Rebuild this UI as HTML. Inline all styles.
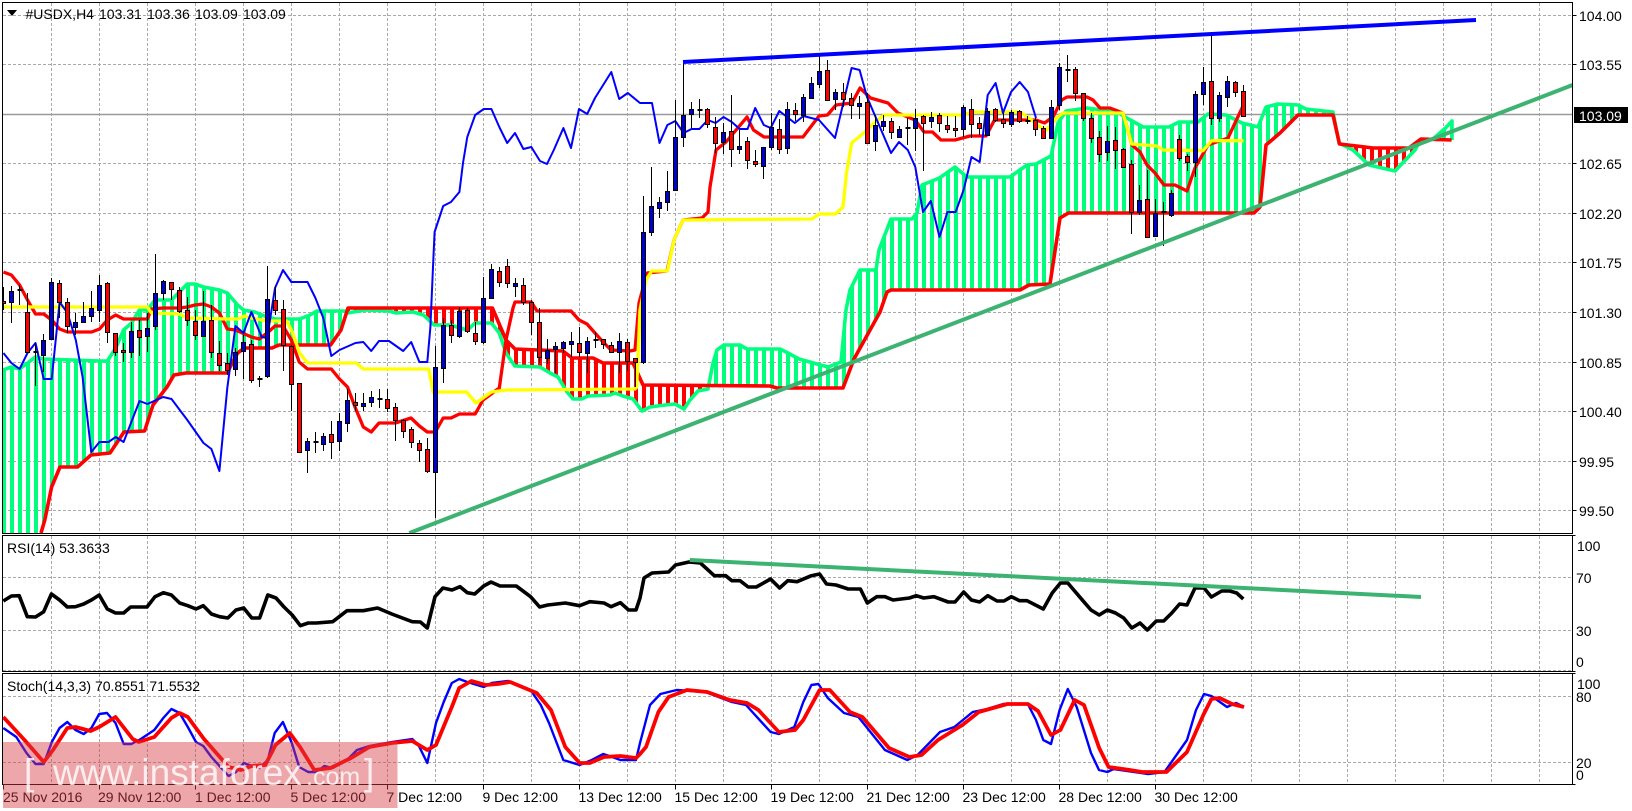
<!DOCTYPE html>
<html><head><meta charset="utf-8"><title>#USDX,H4</title>
<style>
html,body{margin:0;padding:0;background:#fff;width:1632px;height:811px;overflow:hidden}
svg{display:block}
text{font-family:"Liberation Sans",sans-serif;font-size:14px;fill:#000}
</style></head><body>
<svg width="1632" height="811" viewBox="0 0 1632 811" xmlns="http://www.w3.org/2000/svg">
<defs>
<clipPath id="pp"><rect x="3" y="3" width="1569" height="530"/></clipPath>
<clipPath id="pr"><rect x="3" y="536" width="1569" height="135"/></clipPath>
<clipPath id="ps"><rect x="3" y="674" width="1569" height="110"/></clipPath>
<pattern id="hg" patternUnits="userSpaceOnUse" x="0" y="0" width="8" height="8"><rect x="2" y="0" width="4" height="8" fill="#00ff7f"/></pattern>
<pattern id="hr" patternUnits="userSpaceOnUse" x="0" y="0" width="8" height="8"><rect x="2" y="0" width="4" height="8" fill="#ff0000"/></pattern>
</defs>
<rect width="1632" height="811" fill="#fff"/>

<!-- grid -->
<g fill="none" stroke="#a9a9a9" stroke-width="1" stroke-dasharray="3 2">
<path d="M3 15.5H1572M3 64.5H1572M3 163.5H1572M3 213.5H1572M3 262.5H1572M3 312.5H1572M3 362.5H1572M3 411.5H1572M3 461.5H1572M3 510.5H1572"/>
<path d="M3 577.5H1572M3 630.5H1572M3 670.5H1572M3 696.5H1572M3 762.5H1572"/>
<path d="M51.5 3V533M99.5 3V533M147.5 3V533M195.5 3V533M243.5 3V533M291.5 3V533M339.5 3V533M387.5 3V533M435.5 3V533M483.5 3V533M531.5 3V533M579.5 3V533M627.5 3V533M675.5 3V533M723.5 3V533M771.5 3V533M819.5 3V533M867.5 3V533M915.5 3V533M963.5 3V533M1011.5 3V533M1059.5 3V533M1107.5 3V533M1155.5 3V533M1203.5 3V533M1251.5 3V533M1299.5 3V533M1347.5 3V533M1395.5 3V533M1443.5 3V533M1491.5 3V533M1539.5 3V533"/>
<path d="M51.5 536V671M99.5 536V671M147.5 536V671M195.5 536V671M243.5 536V671M291.5 536V671M339.5 536V671M387.5 536V671M435.5 536V671M483.5 536V671M531.5 536V671M579.5 536V671M627.5 536V671M675.5 536V671M723.5 536V671M771.5 536V671M819.5 536V671M867.5 536V671M915.5 536V671M963.5 536V671M1011.5 536V671M1059.5 536V671M1107.5 536V671M1155.5 536V671M1203.5 536V671M1251.5 536V671M1299.5 536V671M1347.5 536V671M1395.5 536V671M1443.5 536V671M1491.5 536V671M1539.5 536V671"/>
<path d="M51.5 674V784M99.5 674V784M147.5 674V784M195.5 674V784M243.5 674V784M291.5 674V784M339.5 674V784M387.5 674V784M435.5 674V784M483.5 674V784M531.5 674V784M579.5 674V784M627.5 674V784M675.5 674V784M723.5 674V784M771.5 674V784M819.5 674V784M867.5 674V784M915.5 674V784M963.5 674V784M1011.5 674V784M1059.5 674V784M1107.5 674V784M1155.5 674V784M1203.5 674V784M1251.5 674V784M1299.5 674V784M1347.5 674V784M1395.5 674V784M1443.5 674V784M1491.5 674V784M1539.5 674V784"/>
</g>
<path d="M3 114.5H1572" stroke="#9a9a9a" stroke-width="1.5" fill="none"/>

<g clip-path="url(#pp)">
<!-- kumo hatch -->
<polygon fill="url(#hg)" points="3,370 11.4,367 19.6,369 27.5,363 35.5,357 43.7,359 100,361 107.4,361 115.7,348 123.6,330 131.5,323 139.5,310 147.4,310 155,300 171.5,300 179.4,292 187.3,284 195,284 203.5,287 219.4,290 227.3,293 237.6,305 243.5,310 254.8,312 267.2,317 275.5,319 299.6,319 310,315 316.8,311 345,311 341,330 330.6,345 279,345 272,348 244.5,348 237.6,353 227,373 186,373 174,375 167,387 153,405 144.6,431 124,432 110,453 91,455 77.5,467 60,467 51.6,487 44.8,520 41,533 3,533"/>
<polygon fill="url(#hr)" points="345,311 348,308 492.4,308 506,340 515,349 563,351 572,358 593,358 603,363 633,363 643,385 708,386 698,391 690,400 684,409 675,404 665,405 650,407 642,411 633,399 623,396 615,393 610,395 588,396 581.7,399 573,399 567,392 558,377 550,373 540,367 514.8,366 506,353 499.3,333 491.4,323 475.2,323 467.3,330 459.7,328 451,325 434,325 423.5,315 413,312 396,313 389,311 365,310 347.5,313"/>
<polygon fill="url(#hg)" points="708,386 713,363 717,350 724,345 740,345 747,349 780,349 788,353 799,359 828,367 841,362 846,310 850,290 860,270 876,270 879,250 884,237 891,219 912,219 917,213 922,185 939.5,178 955,167 967,177 1010,177 1027,165 1036,164 1051,156 1058,123 1066,111 1087,108 1117,112 1125,117 1143,127 1169,127 1179,122 1198,122 1208,114 1226,115 1242,123 1258,127 1266,107 1278,104 1298,105 1306,109 1333,112 1336,114 1298,115 1280,133 1266,145 1260,207 1254,213 1068.5,213 1060,218 1050,284 1029,285 1020,290 891,290 887,292 880,312 854,359 843,388 777,388 770,386"/>
<polygon fill="url(#hr)" points="1339,144 1365,147 1373,148 1409,148 1415,147 1395,171 1369,165 1353,150"/>
<polygon fill="url(#hg)" points="1415,148 1419,143 1433,139 1445.5,128 1452,121 1452,140 1421,139"/>

<g fill="none" stroke-linejoin="round" stroke-linecap="butt">
<!-- senkou A -->
<polyline stroke="#00ff7f" stroke-width="3.6" points="3,370 11.4,367 19.6,369 27.5,363 35.5,357 43.7,359 100,361 107.4,361 115.7,348 123.6,330 131.5,323 139.5,310 147.4,310 155,300 171.5,300 179.4,292 187.3,284 195,284 203.5,287 219.4,290 227.3,293 237.6,305 243.5,310 254.8,312 267.2,317 275.5,319 299.6,319 310,315 316.8,311 344.4,311 347.5,313 365,310 389,311 396,313 413,312 423.5,315 434,325 451,325 459.7,328 467.3,330 475.2,323 491.4,323 499.3,333 506,353 514.8,366 540,367 550,373 558,377 567,392 573,399 581.7,399 588,396 610,395 615,393 623,396 633,399 642,411 650,407 665,405 675,404 684,409 690,400 698,391 708,389 713,363 717,350 724,345 740,345 747,349 780,349 788,353 799,359 828,367 841,362 846,310 850,290 860,270 876,270 879,250 884,237 891,219 912,219 917,213 922,185 939.5,178 955,167 967,177 1010,177 1027,165 1036,164 1051,156 1058,123 1066,111 1087,108 1117,112 1125,117 1143,127 1169,127 1179,122 1198,122 1208,114 1226,115 1242,123 1258,127 1266,107 1278,104 1298,105 1306,109 1333,112 1339,143 1353,150 1369,165 1395,171 1415,150 1419,143 1433,139 1445.5,128 1452,121 1452,140"/>
<!-- senkou B -->
<polyline stroke="#ff0000" stroke-width="3.6" points="41,533 44.8,520 51.6,487 60,467 77.5,467 91,455 110,453 124,432 144.6,431 153,405 167,387 174,375 186,373 227,373 237.6,353 244.5,348 272,348 279,345 330.6,345 341,330 348,308 492.4,308 506,340 515,349 563,351 572,358 593,358 603,363 633,363 643,385 770,386 777,388 843,388 854,359 880,312 887,292 891,290 1020,290 1029,285 1050,284 1060,218 1068.5,213 1254,213 1260,207 1266,145 1280,133 1298,115 1333,115 1339.5,144 1365,147 1373,148 1409,148 1421,139 1451.6,140"/>
<!-- tenkan -->
<polyline stroke="#ff0000" stroke-width="3.3" points="3.4,272 11.4,275 19.6,285 27.5,300 35.5,314 43.7,314 51.7,320 59.6,329 67.5,332 91.6,332 99.5,329 107.4,320 115.7,315 123.6,319 147.4,319 151.5,309 163,308 179.4,308 187.3,307 195,305 203.5,304 211.4,307 219.4,313 227.3,329 235.5,330 251.4,337 259.3,339 267.2,333 275,326 283,326 291.3,340 299.2,362 307.5,369 331.3,369 339.5,379 347.5,387 355.4,408 363.3,427 371.2,432 379,423 395.3,423 411,418 419.4,426 427.3,432 435.3,432 443.2,418 451,418 459.4,414 475.2,414 483,400 499.3,388 506,340 513,308 515,302 531.3,302 537,311 571,311 579,320 587,324 595,333 603,342 611,350 630,351 635,350 639,303 647,273 667,271 674,240 683,220 702,218 708,212 710,187 716,150 726,142 747,117 753.5,130 764,137 803,137 819,116 827.5,115 836,105 852,103 860,88 870.5,98 888,103 898,113 915,120 924,132 932.5,132 941,140 955,140 970,136 986,136 994.5,120 1036,120 1044.5,123 1053,117 1061.7,100 1067,97 1087,97 1093,100 1100,108 1110,108 1123,113 1132,145 1140,152 1147,165 1155,173 1164,185 1175,185 1187,191 1195,168 1208,145 1228,138 1235,123 1243.5,105"/>
<!-- kijun -->
<polyline stroke="#ffff00" stroke-width="3.3" points="3.4,307 147.4,307 151.5,313 179.4,314 187.3,318 227.3,319 237.6,319 244.5,316 251.4,318 267.2,321 286.8,321 292.7,333 299.6,353 307.5,363 356.4,363 363.3,369 428.7,369 433.2,392 466.6,392 475.9,403 491.4,392 506.2,390 635,389 636.7,387 640,310 646,280 651.7,271 667.4,271 674,240 683,220 812,219 819,214 835.5,214 843,207 846.5,173 851.6,143 863.7,133 874,123 884,115 963,115 971.6,112 1020,112 1031.6,120 1036.6,125 1046.6,130 1056.6,118 1063,113 1123,113 1131.7,144 1156.7,146 1163.3,150 1203,150.7 1211.7,140.7 1243.5,140.7"/>
<!-- chikou -->
<polyline stroke="#0000ff" stroke-width="2" points="3.4,353 11.4,363 19.6,369 27.5,353 35.5,343 43.7,379 51.7,379 59.6,302 67.5,313 75.8,340 82.6,377 91.3,452 99.5,442 108.5,442 115.7,437 123.6,442 139.5,401 147.4,404 163.2,397 171.5,399 187.3,420 203.5,443 211.4,449 219.4,471 227.3,388 235.5,326 243.5,333 251.4,312 261.7,337 267.2,338 275,288 283,270 291.3,282 307.5,282 315.4,298 323.3,318 331.3,356 339.5,350 355.4,343 363.3,342 371.2,351 379,341 389,341 403.2,351 411.2,342 419.4,362 427.3,362 430.4,327 433,267 434.6,232 443.2,206 451,202 459.4,192 463,163 467.3,137 475.2,115 483.8,109 491.4,109 499.3,127 507.2,143 515,133 523.4,149 531.3,147 540,161 547,164 553.8,150 563.4,128 571,148 579,109 587.2,114 595,98 611.3,72 619.2,99 627.8,93 640,103 652,103 659.5,143 667.4,125 675.3,121 683.6,133 691.5,129 699.4,129 707.7,120 715.6,123 723.5,117 731.8,122 739.7,129 747.6,129 755.2,108 763.8,125 770.7,128 779.3,111 794.8,123 803.4,116 819,120 835,138 851.6,68 859.6,70 867,97 891,153 899,142 907.8,150 915.3,167 923,212 930.8,201 939.5,237 947.4,212 955.6,212 963.6,190 971.5,157 979.7,162 987.7,95 995.6,83 1003,113 1011,92 1019.7,82 1028,92 1036,118"/>
</g>

<!-- candle wicks -->
<path fill="none" stroke="#000" stroke-width="1" d="M3.5 287V310M11.5 286V323M19.5 285V305M27.5 293V352M35.5 343V386M43.5 334V372M51.5 278V340M59.5 280V318M67.5 298V333M75.5 313V335M83.5 302V323M91.5 291V322M99.5 275V322M107.5 282V343M115.5 333V356M123.5 343V362M131.5 322V358M139.5 320V356M147.5 313V352M155.5 254V330M163.5 280V300M171.5 282V300M179.5 287V313M187.5 297V326M195.5 310V340M203.5 291V337M211.5 305V358M219.5 341V371M227.5 353V375M235.5 348V376M243.5 335V379M251.5 340V383M259.5 376V387M267.5 266V378M275.5 286V315M283.5 300V371M291.5 345V411M307.5 438V473M315.5 432V453M323.5 433V451M331.5 421V459M339.5 413V451M347.5 389V432M355.5 393V411M363.5 393V411M371.5 391V407M379.5 389V408M387.5 389V412M395.5 403V441M403.5 419V438M411.5 427V448M419.5 440V462M427.5 438V473M435.5 346V518M443.5 318V383M451.5 320V343M459.5 307V338M467.5 308V333M475.5 322V345M483.5 277V344M491.5 264V299M499.5 267V287M507.5 259V288M515.5 278V297M523.5 278V305M531.5 300V335M539.5 308V363M547.5 339V364M555.5 342V373M563.5 341V353M571.5 332V357M579.5 327V357M587.5 337V373M595.5 332V348M603.5 339V349M611.5 342V353M619.5 333V373M627.5 339V371M635.5 358V387M643.5 196V364M651.5 167V236M659.5 197V218M667.5 171V211M675.5 100V190M683.5 63V147M691.5 102V128M699.5 99V118M707.5 108V128M715.5 117V153M723.5 123V154M731.5 95V167M739.5 130V154M747.5 137V169M755.5 150V167M763.5 147V179M771.5 113V150M779.5 119V154M787.5 102V154M795.5 103V121M803.5 94V122M811.5 77V98M819.5 53V88M827.5 60V100M835.5 89V110M843.5 83V107M851.5 93V119M859.5 96V119M867.5 93V143M875.5 115V151M883.5 115V131M891.5 118V139M899.5 126V137M907.5 118V145M915.5 109V151M923.5 115V171M931.5 112V128M939.5 113V132M947.5 116V133M955.5 116V137M963.5 105V137M971.5 99V138M979.5 117V135M987.5 108V135M995.5 108V122M1003.5 113V128M1011.5 110V127M1019.5 110V123M1027.5 116V124M1035.5 118V136M1043.5 126V139M1051.5 100V139M1059.5 63V110M1067.5 55V82M1075.5 67V101M1083.5 93V121M1091.5 113V143M1099.5 131V162M1107.5 126V161M1115.5 127V169M1123.5 148V167M1131.5 160V234M1139.5 185V215M1147.5 170V237M1155.5 199V237M1163.5 202V246M1171.5 190V217M1179.5 135V161M1187.5 154V171M1195.5 91V177M1203.5 67V105M1211.5 33V125M1219.5 92V122M1227.5 76V107M1235.5 81V97M1243.5 85V116"/>
<!-- dojis -->
<path fill="none" stroke="#000" stroke-width="2" d="M17.5 290h5M33.5 352h5M257.5 379h5M313.5 442h5M377.5 399h5M593.5 340h5M697.5 110h5M905.5 128h5M1025.5 121h5M1065.5 70h5M1161.5 212h5"/>
<!-- red bodies -->
<path fill="#ff0000" stroke="#000" stroke-width="1" d="M1.5 301.5h4V303.5h-4zM25.5 312.5h4V352.5h-4zM57.5 283.5h4V302.5h-4zM65.5 302.5h4V326.5h-4zM105.5 283.5h4V332.5h-4zM113.5 333.5h4V352.5h-4zM121.5 350.5h4V352.5h-4zM137.5 330.5h4V337.5h-4zM169.5 282.5h4V289.5h-4zM177.5 290.5h4V311.5h-4zM185.5 310.5h4V320.5h-4zM193.5 321.5h4V335.5h-4zM209.5 320.5h4V352.5h-4zM217.5 353.5h4V365.5h-4zM225.5 363.5h4V370.5h-4zM249.5 344.5h4V380.5h-4zM273.5 300.5h4V310.5h-4zM281.5 309.5h4V345.5h-4zM289.5 346.5h4V384.5h-4zM297.5 383.5h4V452.5h-4zM329.5 434.5h4V442.5h-4zM353.5 402.5h4V405.5h-4zM385.5 399.5h4V408.5h-4zM393.5 407.5h4V420.5h-4zM401.5 420.5h4V431.5h-4zM409.5 429.5h4V442.5h-4zM417.5 443.5h4V450.5h-4zM425.5 449.5h4V471.5h-4zM449.5 325.5h4V335.5h-4zM465.5 310.5h4V331.5h-4zM473.5 333.5h4V341.5h-4zM497.5 271.5h4V282.5h-4zM505.5 266.5h4V283.5h-4zM521.5 285.5h4V302.5h-4zM529.5 302.5h4V322.5h-4zM537.5 322.5h4V357.5h-4zM577.5 343.5h4V352.5h-4zM601.5 339.5h4V344.5h-4zM609.5 345.5h4V352.5h-4zM625.5 342.5h4V361.5h-4zM633.5 358.5h4V362.5h-4zM705.5 109.5h4V124.5h-4zM713.5 127.5h4V143.5h-4zM729.5 131.5h4V149.5h-4zM745.5 141.5h4V160.5h-4zM753.5 161.5h4V164.5h-4zM777.5 129.5h4V149.5h-4zM793.5 110.5h4V114.5h-4zM825.5 70.5h4V100.5h-4zM841.5 92.5h4V99.5h-4zM849.5 98.5h4V105.5h-4zM865.5 102.5h4V143.5h-4zM889.5 121.5h4V132.5h-4zM921.5 116.5h4V123.5h-4zM937.5 115.5h4V123.5h-4zM945.5 125.5h4V129.5h-4zM953.5 128.5h4V130.5h-4zM969.5 109.5h4V124.5h-4zM977.5 123.5h4V128.5h-4zM993.5 109.5h4V120.5h-4zM1001.5 119.5h4V123.5h-4zM1017.5 111.5h4V121.5h-4zM1033.5 120.5h4V129.5h-4zM1041.5 128.5h4V138.5h-4zM1073.5 69.5h4V93.5h-4zM1081.5 93.5h4V118.5h-4zM1089.5 118.5h4V138.5h-4zM1097.5 137.5h4V154.5h-4zM1113.5 140.5h4V150.5h-4zM1121.5 149.5h4V167.5h-4zM1129.5 164.5h4V212.5h-4zM1145.5 199.5h4V237.5h-4zM1177.5 139.5h4V158.5h-4zM1185.5 156.5h4V162.5h-4zM1209.5 81.5h4V118.5h-4zM1233.5 82.5h4V92.5h-4zM1241.5 91.5h4V116.5h-4z"/>
<!-- blue bodies -->
<path fill="#0000cd" stroke="#000" stroke-width="1" d="M9.5 291.5h4V302.5h-4zM41.5 340.5h4V355.5h-4zM49.5 282.5h4V339.5h-4zM73.5 322.5h4V327.5h-4zM81.5 316.5h4V322.5h-4zM89.5 308.5h4V316.5h-4zM97.5 285.5h4V310.5h-4zM129.5 331.5h4V352.5h-4zM145.5 328.5h4V336.5h-4zM153.5 293.5h4V326.5h-4zM161.5 281.5h4V293.5h-4zM201.5 321.5h4V336.5h-4zM233.5 352.5h4V369.5h-4zM241.5 342.5h4V351.5h-4zM265.5 299.5h4V376.5h-4zM305.5 441.5h4V450.5h-4zM321.5 436.5h4V444.5h-4zM337.5 421.5h4V441.5h-4zM345.5 400.5h4V423.5h-4zM361.5 403.5h4V406.5h-4zM369.5 397.5h4V402.5h-4zM433.5 367.5h4V472.5h-4zM441.5 325.5h4V368.5h-4zM457.5 311.5h4V336.5h-4zM481.5 298.5h4V342.5h-4zM489.5 269.5h4V298.5h-4zM513.5 283.5h4V286.5h-4zM545.5 350.5h4V358.5h-4zM553.5 346.5h4V349.5h-4zM561.5 342.5h4V348.5h-4zM569.5 341.5h4V344.5h-4zM585.5 341.5h4V353.5h-4zM617.5 341.5h4V352.5h-4zM641.5 232.5h4V362.5h-4zM649.5 206.5h4V232.5h-4zM657.5 202.5h4V208.5h-4zM665.5 191.5h4V202.5h-4zM673.5 137.5h4V190.5h-4zM681.5 115.5h4V137.5h-4zM689.5 109.5h4V114.5h-4zM721.5 132.5h4V142.5h-4zM737.5 146.5h4V149.5h-4zM761.5 147.5h4V166.5h-4zM769.5 127.5h4V147.5h-4zM785.5 109.5h4V148.5h-4zM801.5 97.5h4V115.5h-4zM809.5 83.5h4V98.5h-4zM817.5 71.5h4V84.5h-4zM833.5 92.5h4V99.5h-4zM857.5 103.5h4V106.5h-4zM873.5 125.5h4V141.5h-4zM881.5 121.5h4V126.5h-4zM897.5 129.5h4V137.5h-4zM913.5 118.5h4V128.5h-4zM929.5 117.5h4V121.5h-4zM961.5 107.5h4V129.5h-4zM985.5 111.5h4V135.5h-4zM1009.5 112.5h4V124.5h-4zM1049.5 107.5h4V138.5h-4zM1057.5 67.5h4V105.5h-4zM1105.5 141.5h4V152.5h-4zM1137.5 200.5h4V212.5h-4zM1153.5 213.5h4V236.5h-4zM1169.5 193.5h4V215.5h-4zM1193.5 94.5h4V162.5h-4zM1201.5 82.5h4V94.5h-4zM1217.5 95.5h4V118.5h-4zM1225.5 81.5h4V97.5h-4z"/>

<!-- trend lines -->
<line x1="683" y1="62" x2="1476" y2="20" stroke="#0000ff" stroke-width="4"/>
<line x1="409.4" y1="533" x2="1572.6" y2="85" stroke="#3cb371" stroke-width="4"/>
</g>

<!-- RSI -->
<g clip-path="url(#pr)" fill="none" stroke-linejoin="round">
<polyline stroke="#000" stroke-width="3.6" points="3.3,601 11.4,596 19.2,595.7 27.3,616.7 35.5,617 43.7,611.7 51.4,594 59.6,600 67.3,607 75.5,606.7 83.7,604 91.4,600 99.2,595 107.3,609 115.5,613 123.7,613 130.6,607 147,607 155,596.7 163.3,592.7 171.4,595 179.6,603 187.8,605.7 196,609 203.3,605.7 211.4,614 219.6,616.7 227.8,618 236,610 243.7,608 251.8,618 259.6,618 267.8,595 276,598 284,607 292.2,615 300.4,625.7 308.2,623 316.3,623 332.7,621.7 347,610.7 363.3,610.7 377.6,608 391.8,614 412.2,621.7 420.4,622 427.3,628 435,596.7 442.9,588 452,590 460,586.7 467.3,592.7 474.7,594 483.7,586 491,582 500,586 516.3,586 530.6,596.7 539.6,607 547.8,605 565.3,603 579.6,605.7 589.8,601.7 604,603 611,606.7 620.4,602.7 628.6,610 636,610 640,598 644,578 652,573 668.6,572 675.5,565 689,562 700.4,563 714.3,575.7 725.7,575.7 731.8,580.7 740,580.7 748.2,587 756.3,587 770.6,579 779.6,588 787.8,580.7 797,581.7 811.4,575.7 819.6,574 826.5,584 836,585 848.2,589 860.4,589 867.3,603 876.7,596.7 885,596.7 893,600 909.4,598 916.3,595.7 923.7,598 933.9,596.7 948.2,602 955,602 963.7,592 971.4,600 979.6,602 987.8,595.7 997,601 1004,601 1011.4,596.7 1019.6,600.7 1027,600.7 1043.3,609 1052.2,593 1060.4,583 1067.8,583 1082.9,600.7 1091,610 1099.2,615 1107.3,610 1115.5,613 1123.7,618 1131.8,628 1140,623 1147.3,630 1156.3,621 1163.7,621 1171.8,613 1179.6,604 1187,605 1195,588 1204,588 1211.4,597 1221.6,591 1229.8,591 1236.7,593 1243.3,599"/>
<line x1="689.8" y1="560" x2="1421" y2="597" stroke="#3cb371" stroke-width="4"/>
</g>

<!-- Stochastic -->
<g clip-path="url(#ps)" fill="none" stroke-linejoin="round">
<polyline stroke="#0000ff" stroke-width="2.4" points="3.3,728 16.3,737 26.5,753 35.5,764 43.7,764 51.8,742 59.6,728 67.3,722 75.5,730 83.7,734 91.4,728 99.2,714 107,713 115.5,723 123.7,744 131.4,744 140.8,739 154.3,730 163.3,718 171.4,709 179.6,713 187.8,727 196,742 203.3,746 211.4,757 220.4,767 228.6,776 236,772 243.7,763 251.8,766 259.6,768 267.8,760 274.7,733 282.9,722 291.8,743 299.2,767 308.2,772 316.3,772 324.5,766 332.7,768 347,760 357,750 369.4,746 391.8,742 412.2,739 418.4,745 427.3,763 436,723 443.7,702 451.8,683 459.2,679 467.3,682 483.7,687 491.8,683 508.2,681 530.6,690 540.8,705 549,723 563.3,760 579.6,765 591.8,760 603.3,754 612.2,757 620.4,760 636,760 640,743 650,705 660.4,694 676.7,690 705.3,692 731.8,702 746,705 770.6,732 778.8,734 794.3,727 803.3,702 811.4,685 818.4,684 827.8,698 844,713 858.4,717 884.9,750 907.3,760 917.6,755 940,732 954.3,727 972.7,712 987,709 1003.3,704 1027.8,704 1036,720 1043.3,740 1051,744 1059.6,710 1067.8,689 1076.7,707 1091,753 1099,770 1107.3,772 1113.5,769 1148.2,774 1164.5,772 1187,740 1196,710 1204,694 1211.4,696 1227,707 1236,703 1244,707"/>
<polyline stroke="#ff0000" stroke-width="3.8" points="3.3,717 24.5,740 43.7,762 53,750 67.3,728 75.5,727 90.6,731 99.2,727 115.5,717 132.7,739 138.8,742 154.3,737 171.4,718 179.6,713 187.8,717 204,739 228.6,767 240.8,770 251.8,766 265.3,765 275.5,745 289.8,733 300,747 314.3,770 330.6,768 351,758 369.4,747 391.8,743 412.2,741 427.3,750 436,745 451.8,707 459.2,688 471.4,681 485.7,685 498,684 510.2,682 536.7,693 551,710 565.3,747 579.6,763 589.8,763 604,757 620.4,756 636,758 640,754 646,747 658.4,712 668.6,697 687,690 707.3,692 729.8,700 747,703 758.4,710 778.8,732 795,730 803.3,720 819.6,690 829.8,690 850,712 862.4,717 889,748 909.4,757 921.6,755 938,740 962.4,725 978.8,712 1007.3,704 1027.8,704 1038,711 1051,735 1060.4,730 1074.7,700 1084,705 1099.2,748 1108.6,767 1129.8,770 1142,772 1166.5,772 1187,752 1203.3,715 1211.4,699 1219.6,698 1232,704 1244,707"/>
</g>

<!-- frames -->
<g fill="none" stroke="#000" stroke-width="1">
<rect x="2.5" y="2.5" width="1570" height="531"/>
<rect x="2.5" y="535.5" width="1570" height="136"/>
<rect x="2.5" y="673.5" width="1570" height="111"/>
<path d="M1572.5 15.5h4M1572.5 64.5h4M1572.5 163.5h4M1572.5 213.5h4M1572.5 262.5h4M1572.5 312.5h4M1572.5 362.5h4M1572.5 411.5h4M1572.5 461.5h4M1572.5 510.5h4M1572.5 535.5h3M1572.5 671.5h3M1572.5 673.5h3M1572.5 784.5h3"/>
<path d="M3.5 784.5v5M99.5 784.5v5M195.5 784.5v5M291.5 784.5v5M387.5 784.5v5M483.5 784.5v5M579.5 784.5v5M675.5 784.5v5M771.5 784.5v5M867.5 784.5v5M963.5 784.5v5M1059.5 784.5v5M1155.5 784.5v5"/>
</g>

<!-- header -->
<path d="M7 10h10l-5 6z" fill="#000"/>
<text x="25.5" y="19">#USDX,H4</text>
<text x="99" y="19">103.31</text>
<text x="147" y="19">103.36</text>
<text x="195" y="19">103.09</text>
<text x="243" y="19">103.09</text>
<text x="7" y="553">RSI(14) 53.3633</text>
<text x="7" y="691">Stoch(14,3,3) 70.8551 71.5532</text>

<!-- price axis -->
<text x="1579" y="21">104.00</text>
<text x="1579" y="70">103.55</text>
<rect x="1574" y="107" width="54" height="16" fill="#000"/>
<text x="1579" y="121" style="fill:#fff">103.09</text>
<text x="1579" y="169">102.65</text>
<text x="1579" y="219">102.20</text>
<text x="1579" y="268">101.75</text>
<text x="1579" y="318">101.30</text>
<text x="1579" y="368">100.85</text>
<text x="1579" y="417">100.40</text>
<text x="1579" y="467">99.95</text>
<text x="1579" y="516">99.50</text>
<text x="1577" y="551">100</text>
<text x="1576" y="583">70</text>
<text x="1576" y="636">30</text>
<text x="1576" y="667">0</text>
<text x="1577" y="689">100</text>
<text x="1576" y="702">80</text>
<text x="1576" y="768">20</text>
<text x="1576" y="780">0</text>

<!-- time axis -->
<text x="3" y="802">25 Nov 2016</text>
<text x="98" y="802">29 Nov 12:00</text>
<text x="195" y="802">1 Dec 12:00</text>
<text x="290.5" y="802">5 Dec 12:00</text>
<text x="386.5" y="802">7 Dec 12:00</text>
<text x="482.5" y="802">9 Dec 12:00</text>
<text x="578.5" y="802">13 Dec 12:00</text>
<text x="674.5" y="802">15 Dec 12:00</text>
<text x="770.5" y="802">19 Dec 12:00</text>
<text x="866.5" y="802">21 Dec 12:00</text>
<text x="962.5" y="802">23 Dec 12:00</text>
<text x="1058.5" y="802">28 Dec 12:00</text>
<text x="1154.5" y="802">30 Dec 12:00</text>

<!-- watermark -->
<rect x="3" y="742" width="394.5" height="66" fill="#d73c42" fill-opacity="0.45"/>
<text x="24" y="785" style="font-size:37px;fill:#fff;fill-opacity:.8">[</text>
<text x="53" y="785" style="font-size:37px;fill:#fff;fill-opacity:.8">www.instaforex</text>
<text x="306" y="785" style="font-size:25px;fill:#fff;fill-opacity:.8">.com</text>
<text x="364" y="785" style="font-size:37px;fill:#fff;fill-opacity:.8">]</text>
</svg>
</body></html>
